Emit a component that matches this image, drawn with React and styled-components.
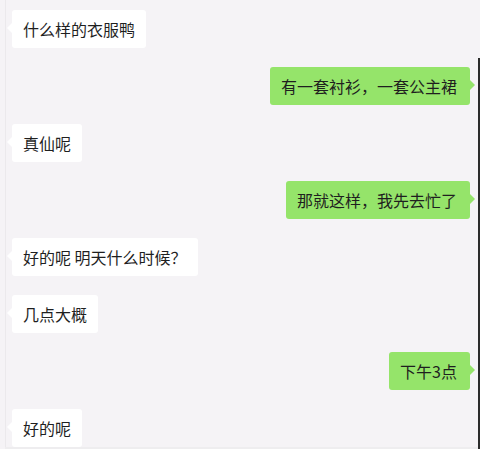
import React from 'react';
import styled, { createGlobalStyle } from 'styled-components';

const GlobalStyle = createGlobalStyle`
  html, body {
    margin: 0;
    padding: 0;
    background: #f5f3f6;
  }
  * {
    box-sizing: border-box;
  }
`;

const Frame = styled.div`
  position: relative;
  width: 480px;
  height: 449px;
  display: flex;
  flex-direction: column;
  background: #f5f3f6;
  font-family: "Noto Sans CJK SC", "Noto Sans", sans-serif;
  overflow: hidden;

  &::after {
    content: '';
    position: absolute;
    right: 0;
    top: 58px;
    bottom: 0;
    width: 2px;
    background: #2b2b2b;
  }
`;

const Panel = styled.div`
  flex: 1;
  margin-left: 5px;
  border-left: 1px solid #ebe9ec;
  padding: 10px 10px 0 6px;
  display: flex;
  flex-direction: column;
  gap: 19px;
`;

const Row = styled.div`
  display: flex;
  justify-content: ${(p) => (p.$mine ? 'flex-end' : 'flex-start')};
`;

const Bubble = styled.div`
  position: relative;
  height: 38px;
  padding: 8px ${(p) => (p.$mine ? '13px 8px 11px' : '11px')};
  font-size: 16px;
  line-height: 22px;
  color: #1f1f1f;
  white-space: nowrap;
  border-radius: 3px;
  background: ${(p) => (p.$mine ? '#95e46a' : '#ffffff')};

  &::before {
    content: '';
    position: absolute;
    top: 13px;
    ${(p) => (p.$mine ? 'right: -5px;' : 'left: -5px;')}
    border-top: 5px solid transparent;
    border-bottom: 5px solid transparent;
    ${(p) =>
      p.$mine
        ? 'border-left: 5px solid #95e46a;'
        : 'border-right: 5px solid #ffffff;'}
  }
`;

const Footer = styled.div`
  height: 5px;
  margin-left: 5px;
  background: #eeedef;
`;

const messages = [
  { text: '什么样的衣服鸭', mine: false },
  { text: '有一套衬衫，一套公主裙', mine: true },
  { text: '真仙呢', mine: false },
  { text: '那就这样，我先去忙了', mine: true },
  { text: '好的呢 明天什么时候？', mine: false },
  { text: '几点大概', mine: false },
  { text: '下午3点', mine: true },
  { text: '好的呢', mine: false },
];

export default function App() {
  return (
    <>
      <GlobalStyle />
      <Frame>
        <Panel>
          {messages.map((m, i) => (
            <Row key={i} $mine={m.mine}>
              <Bubble $mine={m.mine}>{m.text}</Bubble>
            </Row>
          ))}
        </Panel>
        <Footer />
      </Frame>
    </>
  );
}
